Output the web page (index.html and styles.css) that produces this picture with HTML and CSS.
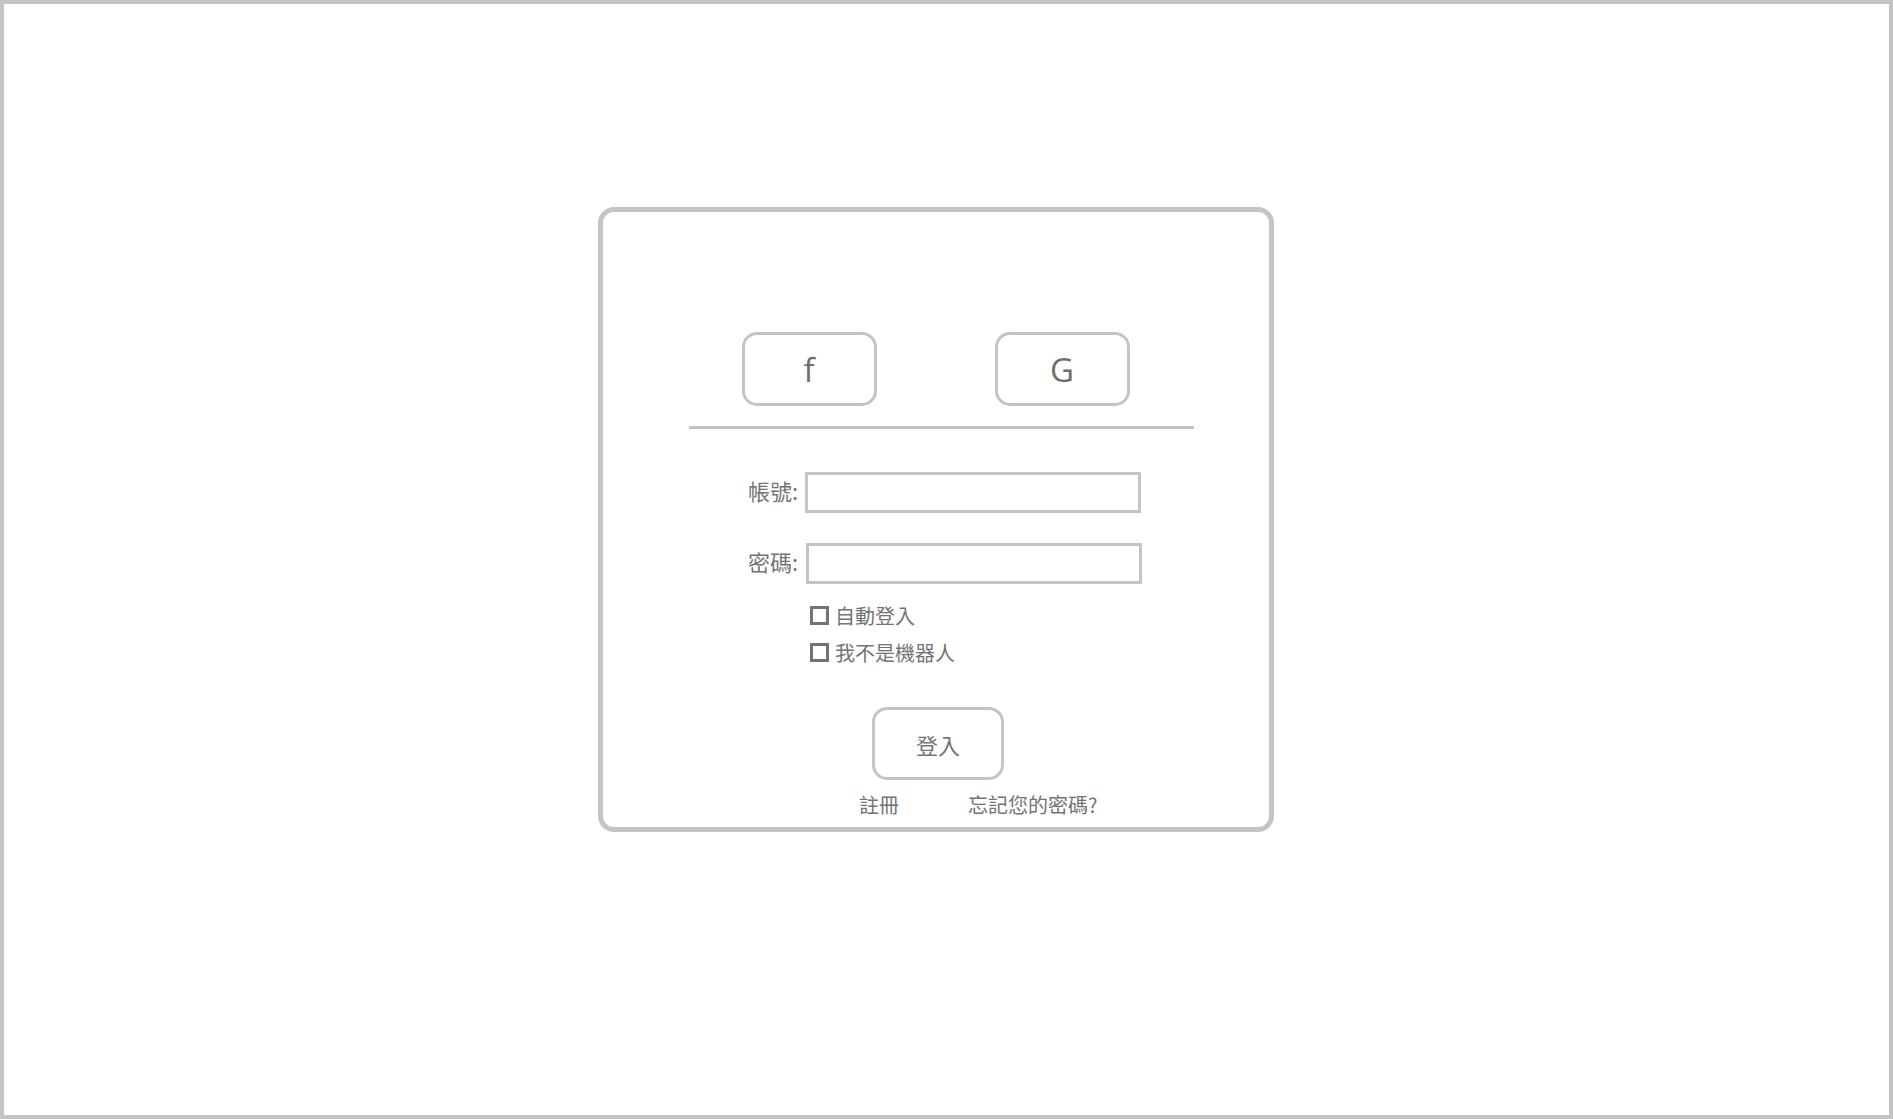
FILE: index.html
```html
<!DOCTYPE html>
<html lang="zh-Hant">
<head>
<meta charset="utf-8">
<title>登入</title>
<link rel="stylesheet" href="styles.css">
</head>
<body>
<div class="frame">
  <div class="card">
    <div class="social">
      <button class="social-btn" type="button">f</button>
      <button class="social-btn" type="button">G</button>
    </div>
    <div class="divider"></div>
    <form class="form">
      <div class="field">
        <label class="field-label" for="acc">帳號:</label>
        <input class="field-input" id="acc" type="text">
      </div>
      <div class="field field-second">
        <label class="field-label" for="pwd">密碼:</label>
        <input class="field-input field-input-shift" id="pwd" type="password">
      </div>
      <div class="checks">
        <label class="check"><input class="check-box" type="checkbox"><span>自動登入</span></label>
        <label class="check"><input class="check-box" type="checkbox"><span>我不是機器人</span></label>
      </div>
      <button class="login-btn" type="button">登入</button>
      <div class="links">
        <a class="link" href="#">註冊</a>
        <a class="link" href="#">忘記您的密碼?</a>
      </div>
    </form>
  </div>
</div>
</body>
</html>
```
FILE: styles.css
```css
html, body {
  margin: 0;
  padding: 0;
  background: #ffffff;
}
body {
  font-family: "Noto Sans CJK TC", "Noto Sans", sans-serif;
  color: #737373;
}
.frame {
  box-sizing: border-box;
  width: 100vw;
  height: 100vh;
  border: 4px solid #c4c4c4;
  padding: 203px 0 0 594px;
  overflow: hidden;
}
.card {
  box-sizing: border-box;
  width: 676px;
  height: 625px;
  border: 5px solid #c4c4c4;
  border-radius: 16px;
  padding-top: 120px;
  background: #fff;
}
.social {
  display: flex;
  justify-content: center;
  gap: 118px;
  padding-right: 1px;
}
.social-btn {
  box-sizing: border-box;
  width: 135px;
  height: 74px;
  border: 3px solid #c4c4c4;
  border-radius: 15px;
  background: #fff;
  font-family: "Open Sans", "Noto Sans", sans-serif;
  font-size: 33px;
  color: #6e6e6e;
  padding: 0;
  line-height: 1;
}
.divider {
  margin: 20px 0 0 86px;
  width: 505px;
  height: 3px;
  background: #c4c4c4;
}
.form {
  margin: 0;
  padding-top: 43px;
}
.field {
  display: flex;
  align-items: center;
  padding-left: 135px;
  gap: 7px;
}
.field-second {
  margin-top: 30px;
}
.field-label {
  width: 60px;
  text-align: right;
  font-size: 22px;
  line-height: 37px;
  padding-bottom: 4px;
  color: #737373;
}
.field-input {
  box-sizing: border-box;
  width: 336px;
  height: 41px;
  border: 3px solid #c4c4c4;
  border-radius: 0;
  background: #fff;
  outline: none;
  margin: 0;
  padding: 0 6px;
  font-size: 18px;
}
.field-input-shift {
  margin-left: 1px;
}
.checks {
  margin-top: 13px;
  padding-left: 207px;
  display: flex;
  flex-direction: column;
}
.check {
  display: flex;
  align-items: center;
  gap: 6px;
  height: 37px;
  font-size: 20px;
  color: #737373;
}
.check-box {
  appearance: none;
  -webkit-appearance: none;
  box-sizing: border-box;
  width: 19px;
  height: 19px;
  margin: 0;
  border: 3px solid #737373;
  background: #fff;
  border-radius: 0;
}
.login-btn {
  display: block;
  box-sizing: border-box;
  margin: 36px 0 0 269px;
  width: 132px;
  height: 73px;
  border: 3px solid #c4c4c4;
  border-radius: 15px;
  background: #fff;
  font-family: "Noto Sans CJK TC", "Noto Sans", sans-serif;
  font-size: 22px;
  color: #737373;
  padding: 0;
}
.links {
  display: flex;
  gap: 69px;
  padding-left: 256px;
  margin-top: 12px;
  line-height: 26px;
}
.link {
  font-size: 20px;
  color: #737373;
  text-decoration: none;
}
```
